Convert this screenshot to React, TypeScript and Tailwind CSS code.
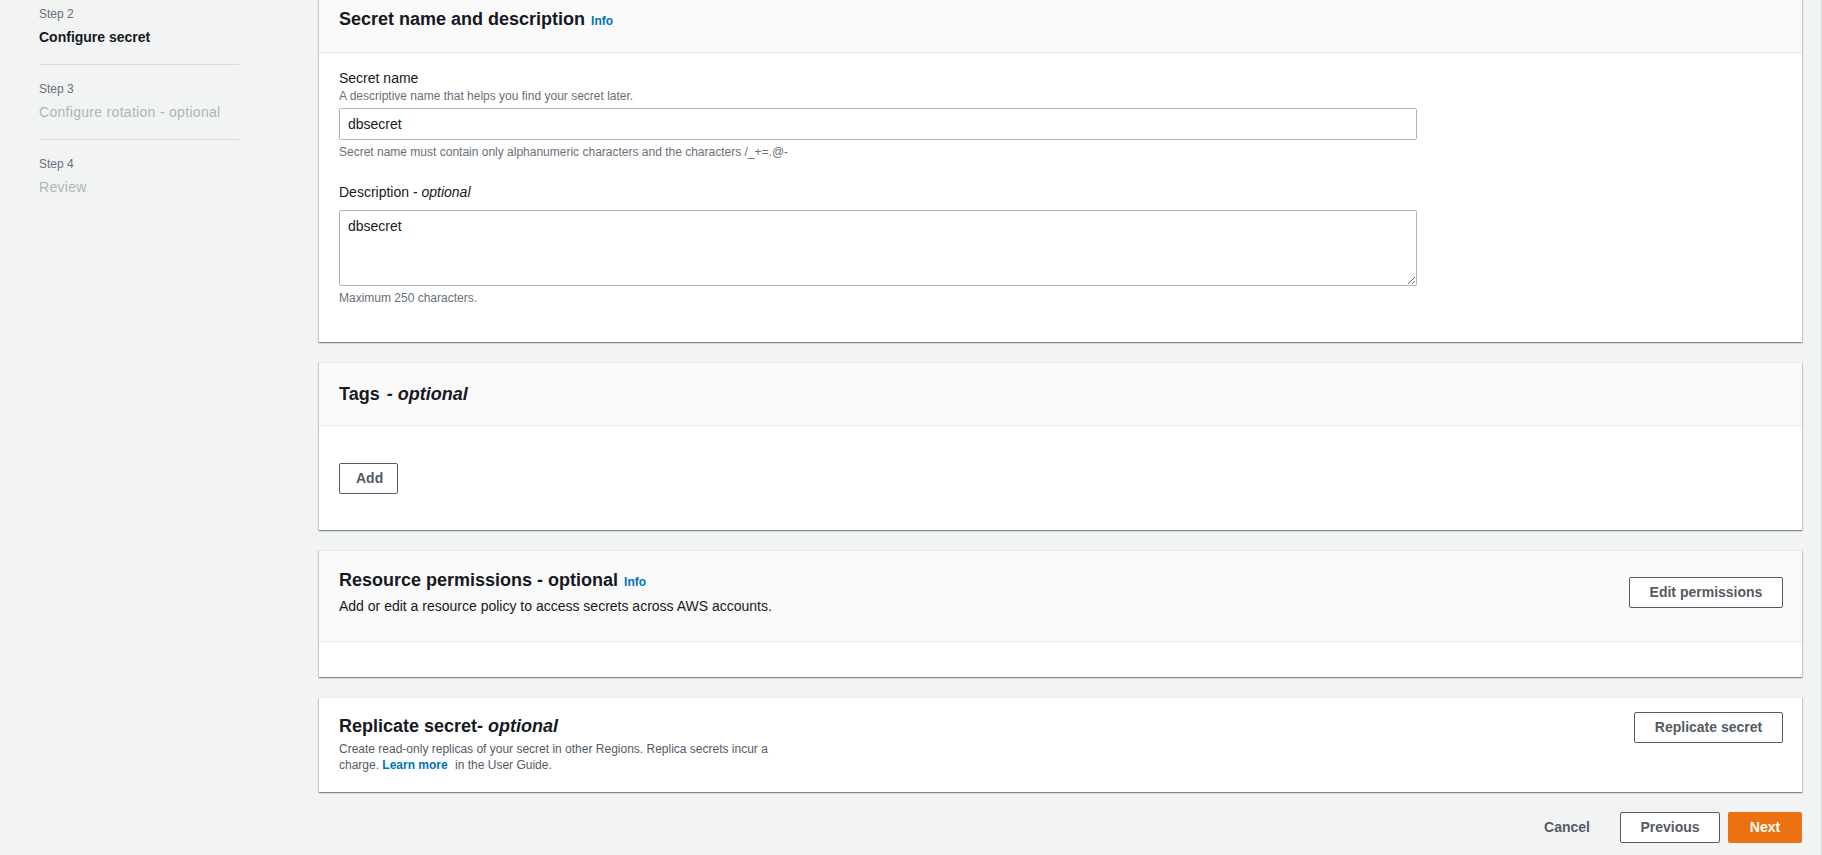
import React from 'react'

const card =
  'bg-white border-t border-[#eaeded] shadow-[0_1px_1px_0_rgba(0,28,36,0.3),1px_1px_1px_0_rgba(0,28,36,0.15),-1px_1px_1px_0_rgba(0,28,36,0.15)]'

const btn =
  'h-[31px] border border-[#545b64] rounded-[2px] bg-white text-[14px] font-bold text-[#545b64] px-[16px]'

function Info() {
  return <a className="ml-[6px] text-[12px] font-bold text-[#0073bb] cursor-pointer">Info</a>
}

function Steps() {
  const steps = [
    { n: 'Step 2', t: 'Configure secret', active: true },
    { n: 'Step 3', t: 'Configure rotation - optional' },
    { n: 'Step 4', t: 'Review' },
  ]
  return (
    <nav className="w-[319px] shrink-0 pl-[39px] pt-[6px]">
      <ul className="w-[200px]">
        {steps.map((s, i) => (
          <li
            key={s.n}
            className={
              'pb-[17px] ' + (i > 0 ? 'pt-[16px] ' : '') + (i < steps.length - 1 ? 'border-b border-[#d5dbdb]' : '')
            }
          >
            <div className="text-[12px] leading-[16px] text-[#687078]">{s.n}</div>
            <div
              className={
                'mt-[5px] text-[14px] leading-[20px] ' +
                (s.active ? 'font-bold text-[#16191f]' : 'text-[#aab7b8] tracking-[0.3px]')
              }
            >
              {s.t}
            </div>
          </li>
        ))}
      </ul>
    </nav>
  )
}

export default function App() {
  return (
    <div className="min-h-screen bg-[#f2f3f3] border-r border-[#d5dbdb] flex text-[#16191f] font-['Liberation_Sans',Arial,sans-serif]">
      <Steps />
      <main className="flex-1 min-w-0 pr-[19px] -mt-[13px] flex flex-col gap-[20px]">
        <section className={card}>
          <div className="bg-[#fafafa] border-b border-[#eaeded] px-[20px] py-[20px]">
            <h2 className="text-[18px] leading-[22px] font-bold">
              Secret name and description
              <Info />
            </h2>
          </div>
          <div className="px-[20px] pt-[15px] pb-[36px]">
            <label className="block text-[14px] leading-[20px]">Secret name</label>
            <p className="text-[12px] leading-[16px] text-[#687078]">A descriptive name that helps you find your secret later.</p>
            <input
              defaultValue="dbsecret"
              className="mt-[4px] block w-[1078px] h-[32px] border border-[#aab7b8] rounded-[2px] px-[8px] text-[14px] text-[#16191f] outline-none"
            />
            <p className="mt-[4px] text-[12px] leading-[16px] text-[#687078]">
              Secret name must contain only alphanumeric characters and the characters /_+=.@-
            </p>
            <label className="block mt-[22px] text-[14px] leading-[20px]">
              Description - <i>optional</i>
            </label>
            <textarea
              defaultValue="dbsecret"
              className="mt-[8px] block w-[1078px] h-[76px] border border-[#aab7b8] rounded-[2px] px-[8px] py-[5px] text-[14px] leading-[20px] text-[#16191f] outline-none"
            />
            <p className="mt-[4px] text-[12px] leading-[16px] text-[#687078]">Maximum 250 characters.</p>
          </div>
        </section>

        <section className={card}>
          <div className="bg-[#fafafa] border-b border-[#eaeded] px-[20px] py-[20px]">
            <h2 className="text-[18px] leading-[22px] font-bold">
              Tags <i className="ml-[2px]">- optional</i>
            </h2>
          </div>
          <div className="px-[20px] pt-[37px] pb-[36px]">
            <button className={btn + ' w-[59px] px-0'}>Add</button>
          </div>
        </section>

        <section className={card}>
          <div className="bg-[#fafafa] border-b border-[#eaeded] pl-[20px] pr-[19px] pt-[18px] pb-[25px] flex items-center justify-between">
            <div>
              <h2 className="text-[18px] leading-[22px] font-bold">
                Resource permissions - optional
                <Info />
              </h2>
              <p className="mt-[3px] text-[14px] leading-[20px]">
                Add or edit a resource policy to access secrets across AWS accounts.
              </p>
            </div>
            <button className={btn + ' w-[154px] h-[30px] px-0'}>Edit permissions</button>
          </div>
          <div className="h-[35px]" />
        </section>

        <section className={card + ' bg-[#fafafa]'}>
          <div className="pl-[20px] pr-[19px] pt-[14px] pb-[19px] flex items-start justify-between">
            <div className="pt-[3px]">
              <h2 className="text-[18px] leading-[22px] font-bold">
                Replicate secret- <i>optional</i>
              </h2>
              <p className="mt-[4px] text-[12px] leading-[16px] text-[#545b64]">
                Create read-only replicas of your secret in other Regions. Replica secrets incur a
                <br />
                charge. <a className="font-bold text-[#0073bb] mr-[4px]">Learn more</a> in the User Guide.
              </p>
            </div>
            <button className={btn + ' w-[149px] h-[29px] px-0'}>Replicate secret</button>
          </div>
        </section>

        <div className="flex items-center justify-end">
          <button className="text-[14px] font-bold text-[#545b64] mr-[30px]">Cancel</button>
          <button className={btn + ' w-[100px] px-0'}>Previous</button>
          <button className="ml-[8px] w-[74px] h-[31px] rounded-[2px] bg-[#ec7211] text-white text-[14px] font-bold">
            Next
          </button>
        </div>
      </main>
    </div>
  )
}
